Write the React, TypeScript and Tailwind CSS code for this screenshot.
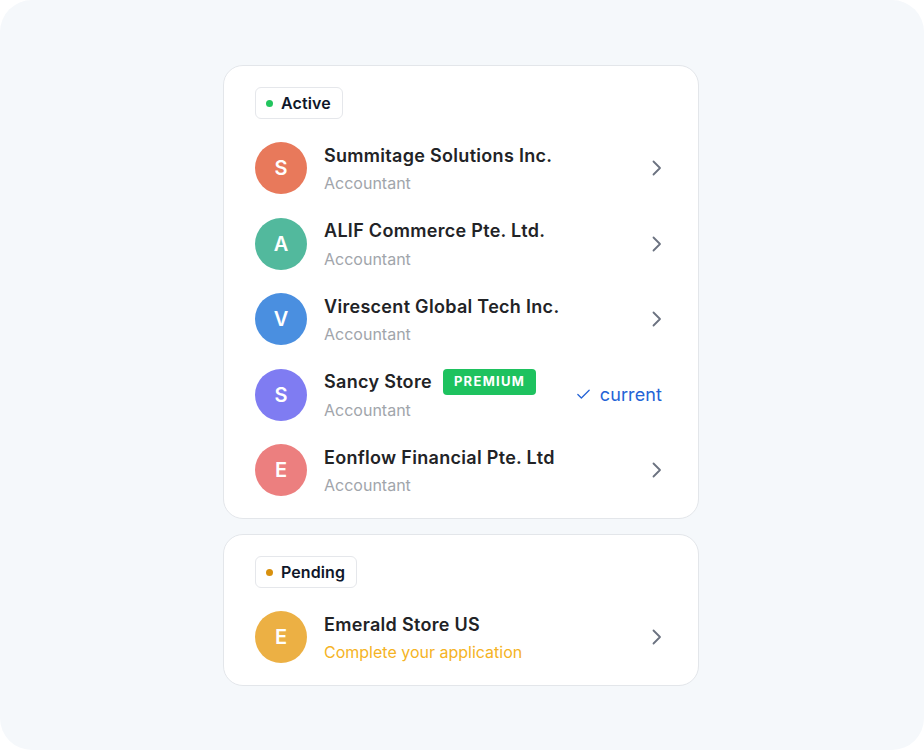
import { Check } from "lucide-react";

type Account = {
  letter: string;
  name: string;
  color: string;
  premium?: boolean;
  current?: boolean;
};

const active: Account[] = [
  { letter: "S", name: "Summitage Solutions Inc.", color: "bg-[#e8795b]" },
  { letter: "A", name: "ALIF Commerce Pte. Ltd.", color: "bg-[#52b99d]" },
  { letter: "V", name: "Virescent Global Tech Inc.", color: "bg-[#4a8fe0]" },
  { letter: "S", name: "Sancy Store", color: "bg-[#7f7cf2]", premium: true, current: true },
  { letter: "E", name: "Eonflow Financial Pte. Ltd", color: "bg-[#ec7f7f]" },
];

function Chevron() {
  return (
    <svg width="10" height="16" viewBox="0 0 10 16" fill="none" className="shrink-0">
      <path d="M1.5 1.5 8 8l-6.5 6.5" stroke="#6b7280" strokeWidth="1.8" strokeLinecap="round" strokeLinejoin="round" />
    </svg>
  );
}

function StatusBadge({ label, dot }: { label: string; dot: string }) {
  return (
    <div className="inline-flex h-8 items-center gap-[8px] self-start rounded-md border border-[#e5e7eb] pl-[10px] pr-[11px]">
      <span className={`h-[7px] w-[7px] rounded-full ${dot}`} />
      <span className="text-[16px] font-semibold tracking-[0.1px] text-[#0f172a]">{label}</span>
    </div>
  );
}

function Row({
  letter,
  color,
  name,
  sub,
  subColor = "text-[#a1a5ab]",
  premium,
  current,
}: Account & { sub: string; subColor?: string }) {
  return (
    <div className="flex items-center">
      <div
        className={`grid h-[52px] w-[52px] shrink-0 place-content-center rounded-full text-[20px] font-semibold text-white ${color}`}
      >
        {letter}
      </div>
      <div className="ml-[17px] flex flex-1 translate-y-px flex-col gap-1">
        <div className="flex h-6 items-center gap-[11px]">
          <span className="text-[18px] font-semibold tracking-[0.3px] text-[#222326]">{name}</span>
          {premium && (
            <span className="flex h-[26px] items-center rounded-[4px] bg-[#1ec25f] px-[11px] text-[13px] font-bold tracking-[0.1em] text-white">
              PREMIUM
            </span>
          )}
        </div>
        <span className={`h-6 text-[16px] leading-6 ${subColor}`}>{sub}</span>
      </div>
      {current ? (
        <div className="mr-[5px] flex items-center gap-[8px] text-[18px] text-[#2463d6]">
          <Check size={17} strokeWidth={1.8} />
          <span className="tracking-[0.1px]">current</span>
        </div>
      ) : (
        <div className="mr-[5px]">
          <Chevron />
        </div>
      )}
    </div>
  );
}

export default function App() {
  return (
    <div className="h-[750px] w-[924px] overflow-hidden rounded-[32px] bg-[#f5f8fb] pt-[65px] font-['Inter',sans-serif]">
      <div className="ml-[223px] flex w-[476px] flex-col gap-[15px]">
        <div className="flex flex-col gap-[23px] rounded-[20px] border border-[#e3e6ea] bg-white px-[31px] pb-[22px] pt-[21px]">
          <StatusBadge label="Active" dot="bg-[#22c55e]" />
          <div className="flex flex-col gap-[23.5px]">
            {active.map((a, i) => (
              <Row key={i} {...a} sub="Accountant" />
            ))}
          </div>
        </div>
        <div className="flex flex-col gap-[23px] rounded-[20px] border border-[#e3e6ea] bg-white px-[31px] pb-[22px] pt-[21px]">
          <StatusBadge label="Pending" dot="bg-[#d8900e]" />
          <Row
            letter="E"
            name="Emerald Store US"
            color="bg-[#ecb044]"
            sub="Complete your application"
            subColor="text-[#f5b324]"
          />
        </div>
      </div>
    </div>
  );
}
